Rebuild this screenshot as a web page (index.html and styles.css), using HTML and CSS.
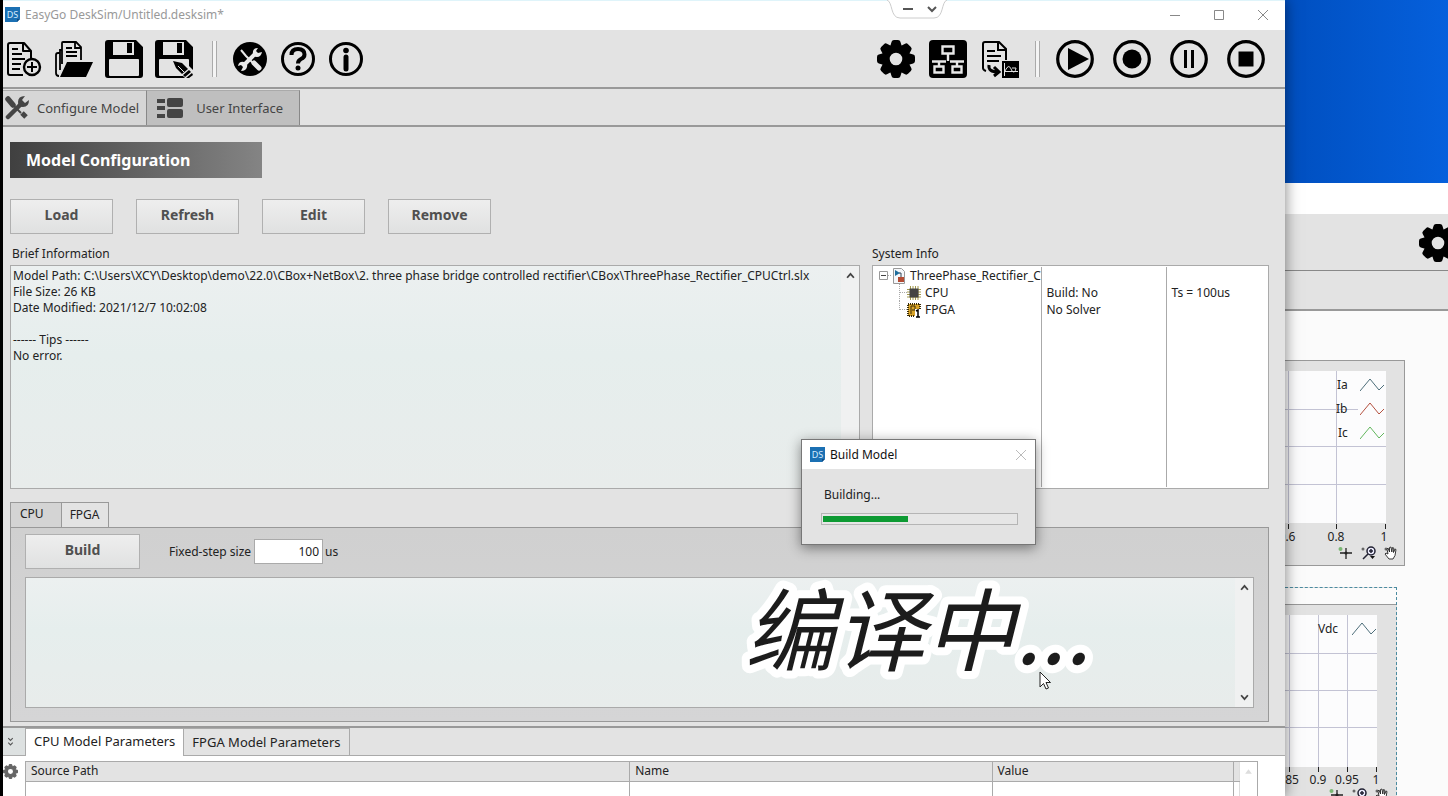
FILE: index.html
```html
<!DOCTYPE html>
<html lang="en">
<head>
    <meta charset="UTF-8">
    <meta name="viewport" content="width=device-width, initial-scale=1.0">
    <title>EasyGo DeskSim</title>
    <link rel="stylesheet" href="styles.css">
</head>
<body>
    <!-- Shared icons -->
    <svg class="icon-defs" aria-hidden="true">
        <symbol id="gear" viewBox="0 0 38 38">
            <circle cx="19" cy="19" r="10.3" fill="none" stroke="currentColor" stroke-width="8"/>
            <g fill="currentColor">
                <path id="tooth" d="M13 7l1.6-5.2Q15 0 17 0h4q2 0 2.4 1.8L25 7z"/>
                <use href="#tooth" transform="rotate(45 19 19)"/>
                <use href="#tooth" transform="rotate(90 19 19)"/>
                <use href="#tooth" transform="rotate(135 19 19)"/>
                <use href="#tooth" transform="rotate(180 19 19)"/>
                <use href="#tooth" transform="rotate(225 19 19)"/>
                <use href="#tooth" transform="rotate(270 19 19)"/>
                <use href="#tooth" transform="rotate(315 19 19)"/>
            </g>
        </symbol>
        <symbol id="logo" viewBox="0 0 15 15">
            <path d="M0 0h15v12l-3 3H0z" fill="#1b70b3"/>
            <path d="M15 12l-3 3v-3z" fill="#0d4c86"/>
            <text x="7.5" y="11" text-anchor="middle" font-size="9" fill="#d5ecff">DS</text>
        </symbol>
        <symbol id="close" viewBox="0 0 12 12">
            <path d="M1 1l10 10M11 1L1 11" fill="none" stroke="currentColor"/>
        </symbol>
        <symbol id="up" viewBox="0 0 8 8">
            <path d="M1 6l3-3.5L7 6" fill="none" stroke="currentColor" stroke-width="1.6"/>
        </symbol>
        <symbol id="down" viewBox="0 0 8 8">
            <path d="M1 2l3 3.5L7 2" fill="none" stroke="currentColor" stroke-width="1.6"/>
        </symbol>
        <symbol id="wave" viewBox="0 0 24 14">
            <path d="M0 13L10 1l9 11 5-5" fill="none" stroke="currentColor"/>
        </symbol>
        <symbol id="chart-tools" viewBox="0 0 60 14">
            <circle cx="2.5" cy="3" r="2" fill="#7bb874"/>
            <path d="M8 2v11M2 7h12" stroke="#222" stroke-width="1.3"/>
            <circle cx="8" cy="7" r="1.5" fill="#222"/>
            <circle cx="25" cy="3" r="1.5" fill="#666"/>
            <circle cx="33" cy="5" r="4" fill="#eef" stroke="#223" stroke-width="1.5"/>
            <path d="M31 5h4M33 3v4M30 8l-5 5" stroke="#223" stroke-width="1.5"/>
            <path d="M32 10h5l-2.5 3z" fill="#111"/>
            <circle cx="48" cy="3" r="1.5" fill="#666"/>
            <path d="M51 13l-4-5 1-1 2 1-1-5 1-1 1.5 4V1.5L53 1l.8 5 .7-4.500 1.300.5-.3 4.500L57 3l1 .5-1 6-2 3.500z" fill="#fff" stroke="#222" stroke-width=".9"/>
        </symbol>
    </svg>

    <main class="window">
        <header class="titlebar">
            <svg class="logo"><use href="#logo"/></svg>
            <span class="title">EasyGo DeskSim/Untitled.desksim*</span>
            <div class="window-buttons">
                <button aria-label="Minimize"><svg viewBox="0 0 12 12"><path d="M1 6.500h10" stroke="currentColor"/></svg></button>
                <button aria-label="Maximize"><svg viewBox="0 0 12 12"><path d="M1.500 1.500h9v9h-9z" fill="none" stroke="currentColor"/></svg></button>
                <button aria-label="Close"><svg><use href="#close"/></svg></button>
            </div>
            <div class="pull-tab">
                <svg viewBox="0 0 60 20">
                    <path d="M0 0c6 2 3 18 13 18h34c10 0 7-16 13-18" fill="#fff" stroke="#ccc"/>
                    <path d="M16 9h10" stroke="#555" stroke-width="2"/>
                    <path d="M41 7l4 4 4-4" fill="none" stroke="#555" stroke-width="2"/>
                </svg>
            </div>
        </header>

        <nav class="toolbar">
            <div class="tools file-tools">
                <button aria-label="New"><svg viewBox="0 0 38 38" fill="none" stroke="currentColor" stroke-width="2">
                    <path d="M18 35H5q-2 0-2-2V5q0-2 2-2h14l7 8v8M18 3v8h8" stroke-linejoin="round"/>
                    <path d="M7 9h6M7 14h10M7 19h13M7 24h9M7 29h8"/>
                    <circle cx="27" cy="27" r="8" stroke-width="2.4"/>
                    <path d="M27 22v10M22 27h10"/>
                </svg></button>
                <button aria-label="Open"><svg viewBox="0 0 38 38" fill="none" stroke="currentColor" stroke-width="1.8">
                    <path d="M4 36q-3 0-3-3V15q0-2 2-2h2M5 30V10h2M7 24V3q0-1 1-1h13l5 5v13M20 2v6h6"/>
                    <path d="M11 8h6M11 12h11M11 16h11"/>
                    <path d="M12 22h26l-7 15H5z" fill="currentColor" stroke="none"/>
                </svg></button>
                <button aria-label="Save"><svg viewBox="0 0 38 38">
                    <path fill="currentColor" fill-rule="evenodd" d="M3 0h28l7 7v28q0 3-3 3H3q-3 0-3-3V3q0-3 3-3zm5 2v13h21V2zm-3 17q-1 0-1 1v15q0 1 1 1h28q1 0 1-1V20q0-1-1-1z"/>
                    <path d="M22 3h5v10h-5z" fill="currentColor"/>
                </svg></button>
                <button aria-label="Save as"><svg viewBox="0 0 38 38">
                    <path fill="currentColor" fill-rule="evenodd" d="M3 0h28l7 7v28q0 3-3 3H3q-3 0-3-3V3q0-3 3-3zm5 2v13h21V2zm-3 17q-1 0-1 1v15q0 1 1 1h28q1 0 1-1V20q0-1-1-1z"/>
                    <path d="M22 3h5v10h-5z" fill="currentColor"/>
                    <path d="M34 26l4 4v8h-8l-3-3z" fill="#e3e3e3"/>
                    <path d="M18 21l9 2 6 6-6 5-6-6z" fill="currentColor"/>
                    <path d="M34 30l2 2-6 5-2-2zM37 33l1 2-4 3h-3z" fill="currentColor"/>
                    <path d="M23 26l6 6" stroke="#e3e3e3"/>
                </svg></button>
            </div>
            <span class="separator"></span>
            <div class="tools help-tools">
                <button aria-label="Settings"><svg viewBox="0 0 34 34">
                    <circle cx="17" cy="17" r="17" fill="currentColor"/>
                    <g stroke="#e8e8e8" fill="none">
                        <path d="M8 8l5 6 8 8" stroke-width="2"/>
                        <path d="M21 21l5 5" stroke-width="5" stroke-linecap="round"/>
                        <path d="M12 22l10-10" stroke-width="4"/>
                        <path d="M25 6q-6 0-5 6 1 3 4 3 4 0 5-5l-4 1-2-2zM5 24q1-5 6-4 4 1 3 5-1 4-6 4l2-4-2-2z" fill="#e8e8e8" stroke="none"/>
                    </g>
                </svg></button>
                <button aria-label="Help"><svg viewBox="0 0 34 34" fill="none" stroke="currentColor">
                    <circle cx="17" cy="17" r="15.5" stroke-width="3"/>
                    <path d="M10.500 13q0-6 6.500-6t6.500 5.500q0 3-3.500 4.500-3 1.500-3 4.500" stroke-width="4"/>
                    <circle cx="17" cy="26" r="2.5" fill="currentColor" stroke="none"/>
                </svg></button>
                <button aria-label="About"><svg viewBox="0 0 34 34" fill="none" stroke="currentColor">
                    <circle cx="17" cy="17" r="15.5" stroke-width="3"/>
                    <circle cx="17" cy="8.500" r="2.8" fill="currentColor" stroke="none"/>
                    <path d="M17 15v12" stroke-width="5" stroke-linecap="round"/>
                </svg></button>
            </div>
            <div class="tools model-tools">
                <button aria-label="Options"><svg><use href="#gear"/></svg></button>
                <button aria-label="Topology"><svg viewBox="0 0 38 38">
                    <rect width="38" height="38" rx="4" fill="currentColor"/>
                    <path d="M13.500 6.500h11v7h-11zM5.500 26.500h9v6h-9zM23.500 26.500h9v6h-9zM19 14v7M3 21.500h14M21 21.500h14M10 21v5M28 21v5" fill="none" stroke="#e8e8e8" stroke-width="2.4"/>
                </svg></button>
                <button aria-label="Export waveform"><svg viewBox="0 0 38 38" fill="none" stroke="currentColor" stroke-width="2">
                    <path d="M5 31q-3-1-3-3V4q0-2 2-2h14l7 7v11M17 2v8h8"/>
                    <path d="M6 11h8M6 16h14M6 21h12"/>
                    <path d="M8 25q-1 7 9 7M13 27l5 5-5 4" stroke-width="3"/>
                    <path d="M21 21h17v17H21z" fill="currentColor" stroke="none"/>
                    <path d="M23.500 23v13M23 31.500h14M24 31q4-9 7 0 3 3 4-3h-4" stroke="#e3e3e3" stroke-width="1"/>
                </svg></button>
            </div>
            <span class="separator"></span>
            <div class="tools run-tools">
                <button aria-label="Run"><svg viewBox="0 0 38 38"><circle cx="19" cy="19" r="17.300" fill="none" stroke="currentColor" stroke-width="3.2"/><path d="M12 8l21 11-21 11z" fill="currentColor"/></svg></button>
                <button aria-label="Record"><svg viewBox="0 0 38 38"><circle cx="19" cy="19" r="17.300" fill="none" stroke="currentColor" stroke-width="3.2"/><circle cx="19" cy="19" r="9.500" fill="currentColor"/></svg></button>
                <button aria-label="Pause"><svg viewBox="0 0 38 38"><circle cx="19" cy="19" r="17.300" fill="none" stroke="currentColor" stroke-width="3.2"/><path d="M15.500 10v18M22.500 10v18" stroke="currentColor" stroke-width="3"/></svg></button>
                <button aria-label="Stop"><svg viewBox="0 0 38 38"><circle cx="19" cy="19" r="17.300" fill="none" stroke="currentColor" stroke-width="3.2"/><path d="M11.500 11.500h15v15h-15z" fill="currentColor"/></svg></button>
            </div>
        </nav>

        <div class="main-tabs">
            <button class="main-tab active">
                <svg viewBox="0 0 24 24" fill="none" stroke="currentColor">
                    <path d="M3 3l5 6" stroke-width="5.5" stroke-linecap="round"/>
                    <path d="M8 9l8 8" stroke-width="2"/>
                    <path d="M17 17l4 4" stroke-width="5"/>
                    <path d="M3 21L15 9" stroke-width="4.5" stroke-linecap="round"/>
                    <path d="M20 0q-7 0-7 6 0 5 5 5 6 0 6-7l-4 3-3-3z" fill="currentColor" stroke="none"/>
                </svg>
                Configure Model
            </button>
            <button class="main-tab ui-tab">
                <svg viewBox="0 0 26 22" fill="currentColor">
                    <path d="M0 2h8v4H0zM0 9h8v4H0zM0 17h8v4H0z"/>
                    <rect x="10" y="1" width="16" height="9" rx="2"/>
                    <rect x="10" y="12" width="16" height="9" rx="2"/>
                </svg>
                User Interface
            </button>
        </div>

        <section class="content">
            <h1>Model Configuration</h1>
            <div class="actions">
                <button class="btn">Load</button>
                <button class="btn">Refresh</button>
                <button class="btn">Edit</button>
                <button class="btn">Remove</button>
            </div>

            <div class="info-row">
                <div class="brief">
                    <label for="brief">Brief Information</label>
                    <div class="text-box">
                        <textarea id="brief" readonly>Model Path: C:\Users\XCY\Desktop\demo\22.0\CBox+NetBox\2. three phase bridge controlled rectifier\CBox\ThreePhase_Rectifier_CPUCtrl.slx
File Size: 26 KB
Date Modified: 2021/12/7 10:02:08

------ Tips ------
No error.</textarea>
                        <div class="scrollbar">
                            <button aria-label="Scroll up"><svg><use href="#up"/></svg></button>
                            <button aria-label="Scroll down"><svg><use href="#down"/></svg></button>
                        </div>
                    </div>
                </div>
                <div class="system">
                    <h2>System Info</h2>
                    <div class="system-box">
                        <table class="tree">
                            <colgroup><col class="col-name"><col class="col-build"><col></colgroup>
                            <tr>
                                <td><div class="node">
                                    <svg class="toggle" viewBox="0 0 19 17" fill="none"><path d="M6.500 4.500h8v8h-8z" fill="#fff" stroke="#999"/><path d="M8 8.500h5" stroke="#444"/><path d="M15 8.500h4" stroke="#aaa" stroke-dasharray="1 1"/></svg>
                                    <svg class="node-icon" viewBox="0 0 14 16"><path d="M1.500.5h8l3 3v12h-11z" fill="#f5f7fa" stroke="#999"/><path d="M3 2l5 3-5 3z" fill="#1e6d9c"/><path d="M7 5h2v4" stroke="#345" fill="none"/><path d="M6 9h6v5H6z" fill="#b44b32"/></svg>
                                    <span>ThreePhase_Rectifier_CPUCtrl</span>
                                </div></td>
                                <td></td>
                                <td></td>
                            </tr>
                            <tr>
                                <td><div class="node child">
                                    <svg class="branch" viewBox="0 0 8 17" fill="none"><path d="M.5 0v17M1 8.500h7" stroke="#aaa" stroke-dasharray="1 1"/></svg>
                                    <svg class="node-icon" viewBox="0 0 14 16"><path d="M3.500 1v14M6 1v14M8.500 1v14M11 1v14M0 4.500h14M0 7h14M0 9.500h14M0 12h14" stroke="#a39a4c"/><path d="M2.500 3.500h9v9h-9z" fill="#444"/></svg>
                                    <span>CPU</span>
                                </div></td>
                                <td>Build: No</td>
                                <td>Ts = 100us</td>
                            </tr>
                            <tr>
                                <td><div class="node child">
                                    <svg class="branch" viewBox="0 0 8 17" fill="none"><path d="M.5 0v9M1 8.500h7" stroke="#aaa" stroke-dasharray="1 1"/></svg>
                                    <svg class="node-icon" viewBox="0 0 14 16"><path d="M1 2h12v12H1z" fill="#d9a428" stroke="#3a2c08" stroke-width="2" stroke-dasharray="1 1"/><path d="M4 12V4h4v4H5" fill="none" stroke="#3a2c08"/><path d="M8 7h6v9H8z" fill="#fff"/><path d="M9 9l2-1v7M9 15h4" fill="none" stroke="#000" stroke-width="1.5"/></svg>
                                    <span>FPGA</span>
                                </div></td>
                                <td>No Solver</td>
                                <td></td>
                            </tr>
                            <tr class="filler"><td></td><td></td><td></td></tr>
                        </table>
                    </div>
                </div>
            </div>

            <div class="target-tabs">
                <button class="target-tab active">CPU</button>
                <button class="target-tab">FPGA</button>
            </div>
            <div class="target-panel">
                <div class="build-row">
                    <button class="btn build">Build</button>
                    <label for="step">Fixed-step size</label>
                    <input id="step" type="text" value="100">
                    <span>us</span>
                </div>
                <div class="text-box output">
                    <textarea aria-label="Build output" readonly></textarea>
                    <div class="scrollbar">
                        <button aria-label="Scroll up"><svg><use href="#up"/></svg></button>
                        <button aria-label="Scroll down"><svg><use href="#down"/></svg></button>
                    </div>
                </div>
            </div>
        </section>

        <section class="params">
            <div class="param-tabs">
                <button class="collapse" aria-label="Collapse"><svg viewBox="0 0 8 8" fill="none" stroke="#555"><path d="M2 1l2 2 2-2M2 5l2 2 2-2"/></svg></button>
                <button class="param-tab active">CPU Model Parameters</button>
                <button class="param-tab">FPGA Model Parameters</button>
            </div>
            <div class="param-body">
                <button class="param-gear" aria-label="Parameter settings"><svg><use href="#gear"/></svg></button>
                <div class="param-table">
                    <table>
                        <colgroup><col class="col-source"><col class="col-param"><col class="col-value"><col></colgroup>
                        <thead><tr><th>Source Path</th><th>Name</th><th>Value</th><th></th></tr></thead>
                        <tbody><tr><td></td><td></td><td></td><td></td></tr></tbody>
                    </table>
                    <div class="param-scroll"><svg viewBox="0 0 8 8"><path d="M1 6l3-4 3 4z" fill="#ddd"/></svg></div>
                </div>
            </div>
        </section>

        <div class="dialog" role="dialog" aria-label="Build Model">
            <div class="dialog-title">
                <svg class="logo"><use href="#logo"/></svg>
                <span>Build Model</span>
                <button aria-label="Close"><svg><use href="#close"/></svg></button>
            </div>
            <div class="dialog-body">
                <label for="progress">Building...</label>
                <progress id="progress" value="44" max="100"></progress>
            </div>
        </div>

        <svg class="caption" viewBox="0 0 400 130" lang="zh"><text x="16" y="96">编译中...</text></svg>
        <svg class="cursor" viewBox="0 0 12 19"><path d="M1 1v15l3.500-3.500 2.500 5.500 2.500-1-2.500-5.500h4.500z" fill="#fff" stroke="#222"/></svg>
    </main>

    <!-- Scope window behind the main one -->
    <aside class="back-window">
        <div class="back-title"></div>
        <div class="back-toolbar"><svg><use href="#gear"/></svg></div>
        <div class="back-tabs"></div>
        <div class="scopes">
            <figure class="scope">
                <svg class="plot" viewBox="0 0 120 206">
                    <path d="M0 11h101v152H0z" fill="#fcfcfd"/>
                    <path d="M3.500 11v152M51.500 11v152M0 49.500h73M0 86.500h101M0 124.500h101" stroke="#c3c3d4"/>
                    <path d="M3.500 164v5M51.500 164v5M100.500 164v5" stroke="#222"/>
                    <text x="52" y="29">Ia</text>
                    <text x="51" y="53">Ib</text>
                    <text x="53" y="77">Ic</text>
                    <use href="#wave" x="75" y="18" width="24" height="14" color="#4d6e7a"/>
                    <use href="#wave" x="75" y="42" width="24" height="14" color="#b4513f"/>
                    <use href="#wave" x="75" y="66" width="24" height="14" color="#62b75d"/>
                    <g text-anchor="middle"><text x="2" y="181">0.6</text><text x="51" y="181">0.8</text><text x="99" y="181">1</text></g>
                    <use href="#chart-tools" x="53" y="186" width="60" height="14"/>
                </svg>
            </figure>
            <figure class="scope selected">
                <svg class="plot" viewBox="0 0 111 206">
                    <path d="M0 11h92v152H0z" fill="#fcfcfd"/>
                    <path d="M4.500 11v152M33.500 11v152M62.500 11v152M0 49.500h92M0 86.500h92M0 123.500h92" stroke="#c3c3d4"/>
                    <path d="M4.500 163v5M33.500 163v5M62.500 163v5M91.500 163v5" stroke="#222"/>
                    <text x="33" y="29">Vdc</text>
                    <use href="#wave" x="67" y="18" width="24" height="14" color="#4d6e7a"/>
                    <g text-anchor="middle"><text x="2" y="180">0.85</text><text x="33" y="180">0.9</text><text x="62" y="180">0.95</text><text x="91" y="180">1</text></g>
                    <use href="#chart-tools" x="44" y="184" width="60" height="14"/>
                </svg>
            </figure>
        </div>
    </aside>
</body>
</html>
```
FILE: styles.css
```css
* {
    box-sizing: border-box;
}

body {
    margin: 0;
    height: 100vh;
    display: flex;
    overflow: hidden;
    padding-left: 3px;
    background: #000;
    color: #222;
    font-family: 'Noto Sans', 'Noto Sans CJK SC', sans-serif;
    font-size: 12px;
    line-height: 16px;
}

button, input, textarea {
    font: inherit;
    color: inherit;
}

button {
    padding: 0;
    border: none;
    background: none;
}

svg {
    display: block;
}

.icon-defs {
    position: absolute;
    width: 0;
    height: 0;
}

/* Main window */
.window {
    position: relative;
    z-index: 1;
    flex: 1;
    min-width: 0;
    display: flex;
    flex-direction: column;
    background: #e3e3e3;
    box-shadow: 0 0 14px rgba(0, 0, 0, 0.5);
}

.titlebar {
    height: 30px;
    flex: none;
    display: flex;
    align-items: center;
    gap: 5px;
    padding: 0 16px 2px 2px;
    background: #fff;
    border-top: 1px solid #dff4fa;
}

.logo {
    width: 15px;
    height: 15px;
}

.logo, #logo {
    overflow: visible;
}

.title {
    color: #999;
}

.window-buttons {
    display: flex;
    gap: 32px;
    margin-left: auto;
    color: #888;
}

.window-buttons svg {
    width: 12px;
    height: 12px;
}

.pull-tab {
    position: absolute;
    top: 0;
    right: 338px;
    width: 60px;
}

/* Toolbar */
.toolbar {
    height: 59px;
    flex: none;
    display: flex;
    align-items: center;
    padding: 1px 20px 0 2px;
    border-bottom: 2px solid #999;
    color: #000;
}

.tools {
    display: flex;
    gap: 12px;
}

.tools svg {
    width: 38px;
    height: 38px;
}

.file-tools {
    margin-right: 3px;
}

.help-tools {
    gap: 14px;
}

.help-tools svg {
    width: 34px;
    height: 34px;
}

.model-tools {
    gap: 14px;
    margin-left: auto;
}

.run-tools {
    gap: 19px;
}

.separator {
    width: 5px;
    height: 36px;
    margin: 0 16px;
    border: solid #aaa;
    border-width: 0 1px;
    background: #f4f4f4;
}

/* Page tabs */
.main-tabs {
    height: 38px;
    flex: none;
    display: flex;
    padding-top: 1px;
    border-bottom: 2px solid #999;
}

.main-tab {
    display: flex;
    align-items: center;
    gap: 8px;
    padding: 0 7px 0 2px;
    background: #d6d6d6;
    border-right: 1px solid #888;
    border-top: 1px solid #aaa;
    color: #444;
    font-size: 13px;
}

.main-tab svg {
    width: 24px;
    height: 24px;
}

.ui-tab {
    gap: 13px;
    padding: 0 16px 0 10px;
    background: #bfbfbf;
}

.ui-tab svg {
    width: 26px;
}

/* Model configuration */
.content {
    flex: none;
    padding: 15px 16px 4px 7px;
}

h1 {
    width: 252px;
    margin: 0 0 21px;
    padding: 0 16px;
    background: linear-gradient(to right, #404040, #848484);
    color: #fff;
    font-size: 16px;
    line-height: 36px;
}

.actions {
    display: flex;
    gap: 23px;
    margin-bottom: 12px;
}

.btn {
    width: 103px;
    height: 35px;
    padding-bottom: 3px;
    border: 1px solid #b0b0b0;
    background: linear-gradient(to bottom, #eee, #e0e1e1);
    color: #505050;
    font-size: 14px;
    font-weight: bold;
}

.info-row {
    display: flex;
    gap: 12px;
    margin-bottom: 13px;
}

.brief {
    flex: 850;
}

.system {
    flex: 397;
    min-width: 0;
}

.brief label, h2 {
    display: block;
    margin: 0 0 3px;
    padding-left: 2px;
    font-size: 12px;
    font-weight: normal;
}

h2 {
    padding-left: 0;
}

.text-box {
    display: flex;
    height: 224px;
    border: 1px solid #aaa;
    background: linear-gradient(to bottom, #ecf0f0, #e6eeed 40%, #e8eceb);
}

textarea {
    flex: 1;
    min-width: 0;
    padding: 2px;
    border: none;
    outline: none;
    resize: none;
    overflow: hidden;
    background: transparent;
}

.scrollbar {
    width: 18px;
    display: flex;
    flex-direction: column;
    justify-content: space-between;
    align-items: center;
    padding: 5px 0;
    background: #f0f1f1;
    color: #444;
}

.scrollbar svg {
    width: 9px;
    height: 9px;
}

.system-box {
    height: 224px;
    padding: 1px 0;
    border: 1px solid #aaa;
    background: #fff;
}

.tree {
    width: 100%;
    height: 100%;
    table-layout: fixed;
    border-collapse: collapse;
}

.tree tr {
    height: 17px;
}

.tree .filler {
    height: auto;
}

.tree td {
    padding: 0 0 0 5px;
    border-right: 1px solid #aaa;
}

.tree td:first-child {
    padding: 0;
}

.tree td:last-child {
    border-right: none;
}

.col-name {
    width: 168px;
}

.col-build {
    width: 125px;
}

.node {
    display: flex;
    align-items: center;
    height: 17px;
    overflow: hidden;
    white-space: nowrap;
}

.node.child {
    padding-left: 26px;
}

.node svg {
    flex: none;
}

.toggle {
    width: 19px;
    height: 17px;
}

.branch {
    width: 8px;
    height: 17px;
}

.node-icon {
    width: 14px;
    height: 16px;
    margin-right: 4px;
}

/* Target tabs */
.target-tabs {
    display: flex;
}

.target-tab {
    height: 25px;
    padding: 0 8px;
    border: 1px solid #999;
    border-width: 1px 1px 0 0;
    background: #e3e3e3;
}

.target-tab.active {
    padding: 0 17px 3px 9px;
    border-left-width: 1px;
    background: #d4d4d4;
}

.target-panel {
    padding: 6px 14px 13px;
    border: 1px solid #999;
    background: linear-gradient(to bottom, #d0d0d0, #d5d5d6);
}

.build-row {
    display: flex;
    align-items: center;
    margin-bottom: 8px;
}

.build {
    width: 115px;
    margin-right: 29px;
}

.build-row input {
    width: 69px;
    height: 25px;
    margin: 0 2px 0 3px;
    padding: 0 3px;
    border: 1px solid #aaa;
    background: #fff;
    text-align: right;
}

.output {
    height: 131px;
}

/* Model parameters */
.params {
    flex: 1;
    min-height: 0;
    overflow: hidden;
    background: #fff;
    border-top: 2px solid #999;
}

.param-tabs {
    display: flex;
    height: 28px;
    background: #e3e3e3;
    border-bottom: 1px solid #aaa;
}

.collapse {
    width: 22px;
    padding-left: 3px;
    background: #dde1e1;
}

.collapse svg {
    width: 9px;
    height: 9px;
}

.param-tab {
    padding: 0 8px;
    border: 1px solid #aaa;
    border-width: 1px 1px 0 0;
    font-size: 13px;
}

.param-tab.active {
    height: 28px;
    padding-bottom: 4px;
    border-left-width: 1px;
    background: #fff;
}

.param-body {
    display: flex;
    padding: 5px 27px 0 0;
}

.param-gear {
    width: 22px;
    padding-top: 3px;
    align-self: flex-start;
    color: #666;
}

.param-gear svg {
    width: 15px;
    height: 15px;
}

.param-table {
    flex: 1;
    display: flex;
    border: 1px solid #aaa;
}

.param-table table {
    flex: 1;
    width: 100%;
    table-layout: fixed;
    border-collapse: collapse;
}

.col-source {
    width: 50%;
}

.col-param {
    width: 30%;
}

.col-value {
    width: 20%;
}

.param-table col:last-child {
    width: 6px;
}

.param-table th, .param-table td {
    height: 19px;
    padding: 0 0 0 5px;
    border-right: 1px solid #aaa;
    font-weight: normal;
    text-align: left;
}

.param-table th {
    background: #e3e3e3;
    border-bottom: 1px solid #aaa;
}

.param-table th:last-child, .param-table td:last-child {
    padding: 0;
    border-right-color: #ddd;
}

.param-table td {
    height: 40px;
}

.param-scroll {
    width: 17px;
    padding: 5px 4px;
}

/* Build dialog */
.dialog {
    position: absolute;
    top: 439px;
    right: 249px;
    width: 235px;
    border: 1px solid #777;
    background: #e3e3e3;
    box-shadow: 0 3px 12px rgba(0, 0, 0, 0.45);
}

.dialog-title {
    display: flex;
    align-items: center;
    gap: 5px;
    height: 29px;
    padding: 0 8px;
    background: #fff;
    color: #111;
}

.dialog-title button {
    margin-left: auto;
    color: #bbb;
}

.dialog-title button svg {
    width: 12px;
    height: 12px;
}

.dialog-body {
    padding: 18px 17px 19px 19px;
}

.dialog-body label {
    display: block;
    margin: 0 0 10px 3px;
}

progress {
    display: block;
    width: 100%;
    height: 12px;
    padding: 2px 1px;
    border: 1px solid #b5b5b5;
    appearance: none;
    background: #e6e6e6;
}

progress::-webkit-progress-bar {
    background: #e6e6e6;
}

progress::-webkit-progress-value {
    background: #0d9a33;
}

/* Subtitle and pointer over the window */
.caption {
    position: absolute;
    top: 568px;
    right: 156px;
    width: 400px;
    height: 130px;
    fill: #1c1c1c;
    stroke: #fff;
    stroke-width: 16px;
    stroke-linejoin: round;
    paint-order: stroke fill;
    font-family: 'Noto Sans CJK SC', sans-serif;
    font-size: 90px;
    font-style: italic;
}

.cursor {
    position: absolute;
    top: 671px;
    right: 234px;
    width: 12px;
    height: 19px;
}

/* Window behind */
.back-window {
    width: 163px;
    flex: none;
    display: flex;
    flex-direction: column;
    overflow: hidden;
    padding-top: 183px;
    background: linear-gradient(to right, #004fc0, #0560dc) #0457cf;
}

.back-title {
    height: 31px;
    flex: none;
    background: #fff;
}

.back-toolbar {
    height: 57px;
    flex: none;
    padding: 10px 0 0 134px;
    background: #e3e3e3;
    border-bottom: 1px solid #888;
    color: #000;
    overflow: hidden;
}

.back-toolbar svg {
    width: 38px;
    height: 38px;
}

.back-tabs {
    height: 40px;
    flex: none;
    background: #e3e3e3;
    border-bottom: 2px solid #999;
}

.scopes {
    flex: 1;
    min-height: 0;
    padding-top: 49px;
    background: #fbfbfb;
}

.scope {
    width: 120px;
    margin: 0 0 21px;
    background: #e2e2e2;
    box-shadow: inset -1px 1px #999, inset 0 -1px #999;
}

.scope.selected {
    width: 112px;
    padding-top: 16px;
    background: linear-gradient(to bottom, #fbfbfb 16px, #999 16px, #999 17px, #e2e2e2 17px);
    border: dashed #4b8ba0;
    border-width: 1px 1px 0 0;
    box-shadow: none;
}

.plot {
    width: 100%;
    color: #222;
    fill: #222;
}
```
